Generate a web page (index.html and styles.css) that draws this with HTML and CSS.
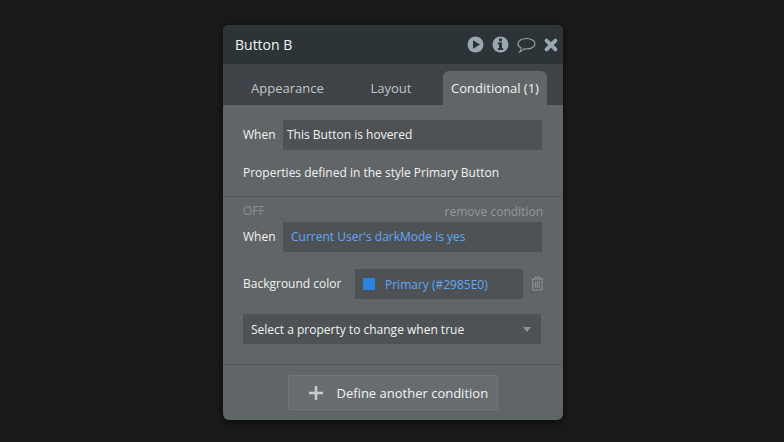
FILE: index.html
```html
<!DOCTYPE html>
<html lang="en">
<head>
  <meta charset="UTF-8">
  <title>Button B</title>
  <link rel="stylesheet" href="styles.css">
</head>
<body>
  <div class="panel">
    <div class="panel-header">
      <div class="panel-title">Button B</div>
      <div class="panel-icons">
        <svg class="icon" width="17" height="17" viewBox="0 0 17 17"><circle cx="8.5" cy="8.5" r="8" fill="#9aa7ae"/><path d="M6 4.2 L13 8.5 L6 12.8 Z" fill="#2c3437"/></svg>
        <svg class="icon" width="17" height="17" viewBox="0 0 17 17"><circle cx="8.5" cy="8.5" r="8" fill="#9aa7ae"/><rect x="7" y="2.6" width="3" height="2.8" fill="#2c3437"/><path d="M5.8 6.6 H10 V12 H11.2 V14 H5.8 V12 H7 V8.6 H5.8 Z" fill="#2c3437"/></svg>
        <svg class="icon icon-chat" width="19" height="17" viewBox="0 0 19 17"><path d="M9.5 1.5 C14.2 1.5 18 3.7 18 6.8 C18 9.9 14.2 12 9.5 12 C8.6 12 7.8 11.9 7 11.8 C6 13.4 4.6 14.6 2.6 15 C3.6 13.8 4 12.6 4 11 C2 10 1 8.5 1 6.8 C1 3.7 4.8 1.5 9.5 1.5 Z" fill="none" stroke="#9aa7ae" stroke-width="1.1"/></svg>
        <svg class="icon" width="14" height="14" viewBox="0 0 14 14"><path d="M2.6 2.6 L11.4 11.4 M11.4 2.6 L2.6 11.4" stroke="#9aa7ae" stroke-width="3.8" stroke-linecap="round"/></svg>
      </div>
    </div>

    <div class="tabs">
      <div class="tab tab-appearance">Appearance</div>
      <div class="tab tab-layout">Layout</div>
      <div class="tab tab-active">Conditional (1)</div>
    </div>

    <div class="section section-first">
      <div class="row">
        <div class="when">When</div>
        <div class="field field-plain">This Button is hovered</div>
      </div>
      <div class="props-note">Properties defined in the style Primary Button</div>
    </div>

    <div class="section section-second">
      <div class="condition-top">
        <span class="off">OFF</span>
        <span class="remove">remove condition</span>
      </div>
      <div class="row">
        <div class="when">When</div>
        <div class="field field-blue">Current User's darkMode is yes</div>
      </div>
      <div class="row row-color">
        <div class="color-label">Background color</div>
        <div class="color-field">
          <span class="swatch"></span>
          <span>Primary (#2985E0)</span>
        </div>
        <svg class="trash" width="13" height="15" viewBox="0 0 14 16"><path d="M5 2.5 V1 H9 V2.5 M0.8 3 H13.2 M2 3 V14.2 Q2 15 2.8 15 H11.2 Q12 15 12 14.2 V3 M5 5.5 V12.5 M7 5.5 V12.5 M9 5.5 V12.5" fill="none" stroke="#8a9194" stroke-width="1.2"/></svg>
      </div>
      <div class="select">
        <span>Select a property to change when true</span>
        <span class="caret"></span>
      </div>
    </div>

    <div class="panel-footer">
      <div class="add-button">
        <svg class="plus" width="16" height="16" viewBox="0 0 16 16"><path d="M8 1 V15 M1 8 H15" stroke="#c9cccd" stroke-width="2.6"/></svg>
        <span>Define another condition</span>
      </div>
    </div>
  </div>
</body>
</html>
```

FILE: styles.css
```css
body {
  margin: 0;
  height: 442px;
  overflow: hidden;
  background: #1a1a1a;
  font-family: 'Open Sans', sans-serif;
  font-size: 12px;
  color: #f2f2f2;
}

.panel {
  width: 340px;
  height: 395px;
  margin: 25px 0 0 223px;
  background: #606568;
  border-radius: 6px;
  overflow: hidden;
  box-shadow: 0 2px 8px rgba(0,0,0,0.6);
  display: flex;
  flex-direction: column;
}

.panel-header {
  height: 39px;
  flex-shrink: 0;
  background: #2c3437;
  display: flex;
  align-items: center;
  justify-content: space-between;
  padding: 0 5px 0 12px;
}

.panel-title {
  font-size: 14px;
  color: #f4f5f5;
}

.panel-icons {
  display: flex;
  align-items: center;
  gap: 8px;
}

.icon {
  display: block;
}

.icon-chat {
  margin-top: 2px;
}

.tabs {
  height: 41px;
  flex-shrink: 0;
  background: #3d4347;
  display: flex;
  align-items: flex-end;
  font-size: 13px;
}

.tab {
  height: 34px;
  line-height: 34px;
  color: #c3c7c9;
}

.tab-appearance {
  margin-left: 28px;
  width: 120px;
}

.tab-layout {
  width: 72px;
  text-indent: -0.5px;
}

.tab-active {
  width: 104px;
  text-align: center;
  background: #606568;
  color: #f2f2f2;
  border-radius: 6px 6px 0 0;
}

.section-first {
  height: 92px;
  flex-shrink: 0;
  box-sizing: border-box;
  padding: 15px 21px 0 20px;
  border-bottom: 1px solid #54595c;
}

.row {
  display: flex;
  align-items: center;
}

.when {
  width: 40px;
  height: 30px;
  line-height: 30px;
}

.field {
  width: 259px;
  height: 30px;
  line-height: 30px;
  background: #4e5255;
  box-sizing: border-box;
}

.field-plain {
  padding-left: 4px;
}

.field-blue {
  padding-left: 8px;
  color: #5fa8f5;
}

.props-note {
  margin-top: 14px;
}

.section-second {
  height: 168px;
  flex-shrink: 0;
  box-sizing: border-box;
  padding: 6px 20px 0;
  border-bottom: 1px solid #54595c;
}

.condition-top {
  display: flex;
  justify-content: space-between;
  height: 19px;
  line-height: 17px;
  color: #8c9194;
}

.off {
  margin-top: -1px;
}

.remove {
  color: #93989b;
}

.row-color {
  margin-top: 17px;
}

.color-label {
  width: 112px;
  flex: none;
  margin-top: -2px;
}

.color-field {
  width: 168px;
  height: 30px;
  flex: none;
  background: #4e5255;
  display: flex;
  align-items: center;
  gap: 10px;
  padding-left: 8px;
  box-sizing: border-box;
  color: #5fa8f5;
}

.swatch {
  width: 12px;
  height: 12px;
  background: #2985e0;
}

.trash {
  flex: none;
  margin: -2px 0 0 8px;
}

.select {
  width: 298px;
  height: 30px;
  margin-top: 15px;
  background: #4e5255;
  display: flex;
  align-items: center;
  justify-content: space-between;
  box-sizing: border-box;
  padding: 0 10px 0 8px;
}

.caret {
  width: 0;
  height: 0;
  border-left: 4.5px solid transparent;
  border-right: 4.5px solid transparent;
  border-top: 5px solid #8f9497;
}

.panel-footer {
  flex: 1;
  display: flex;
  justify-content: center;
  padding-top: 10px;
  padding-right: 1px;
}

.add-button {
  width: 210px;
  height: 35px;
  box-sizing: border-box;
  background: #676c6f;
  border: 1px solid #72777a;
  border-radius: 2px;
  display: flex;
  align-items: center;
  gap: 13px;
  padding-left: 19px;
  font-size: 13px;
}
```
